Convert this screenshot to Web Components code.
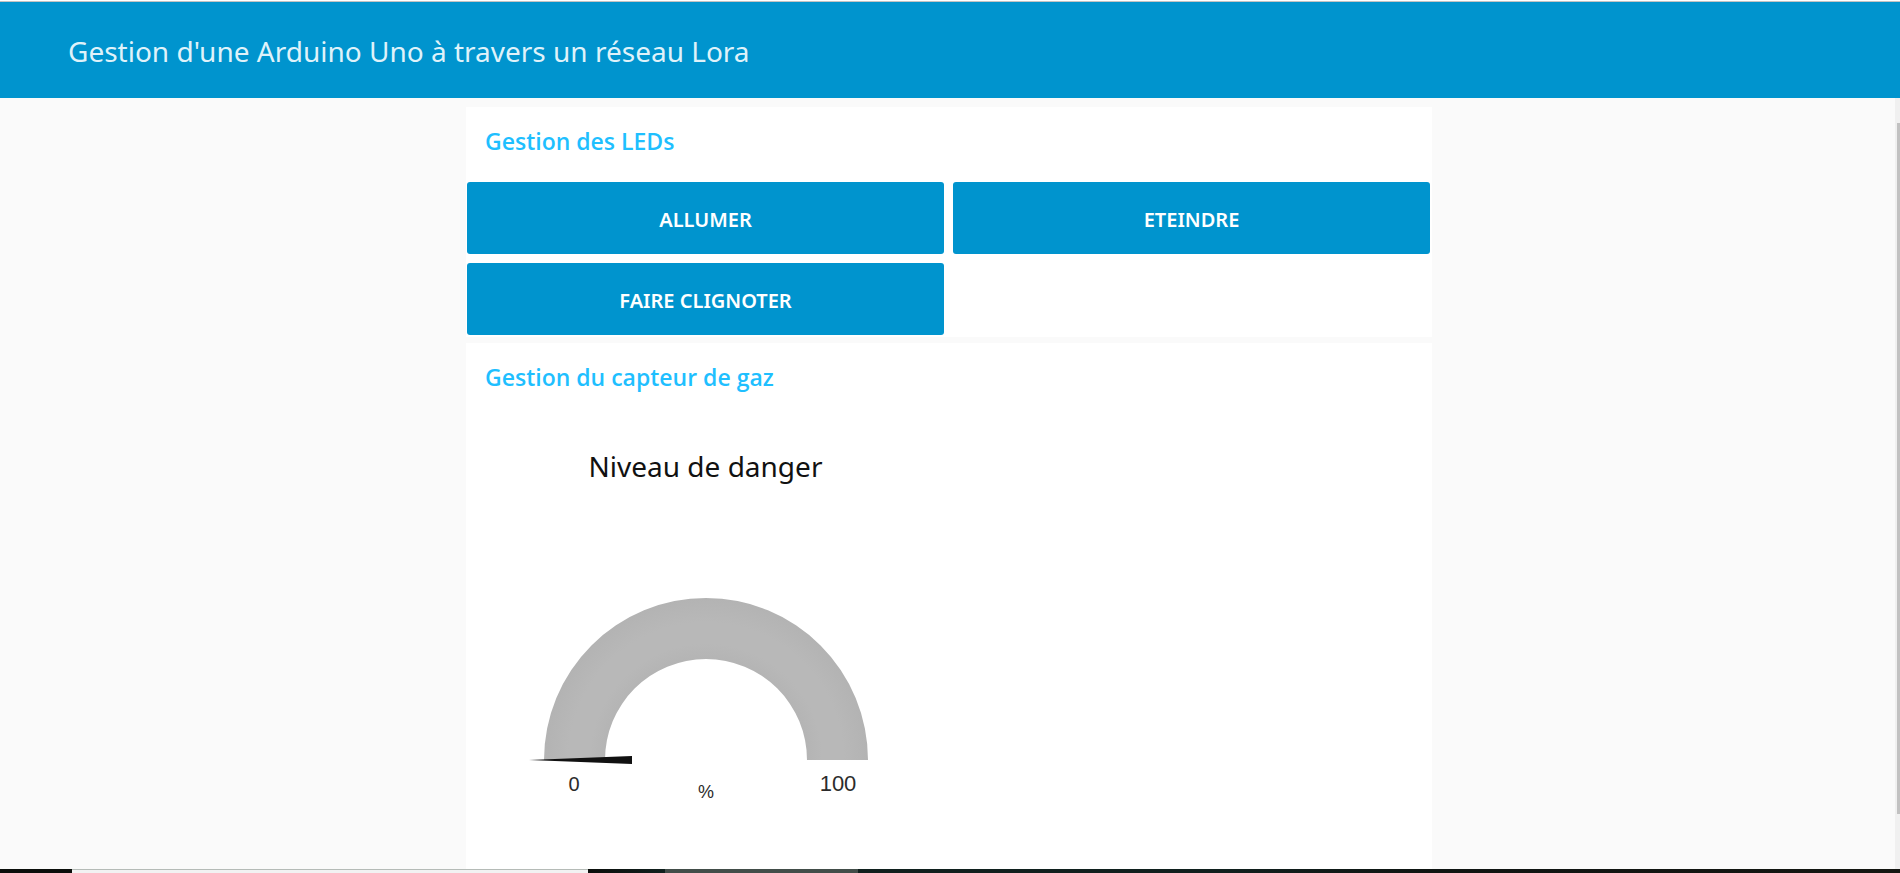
<!DOCTYPE html>
<html lang="fr">
<head>
<meta charset="utf-8">
<title>Gestion d'une Arduino Uno à travers un réseau Lora</title>
<style>
  html, body { height: 100%; margin: 0; }
  body { font-family: "Noto Sans", "Open Sans", sans-serif; background: #fafafa; color: #111; overflow: hidden; }
</style>
</head>
<body>
<dash-app>
  <dash-toolbar slot="header">Gestion d'une Arduino Uno à travers un réseau Lora</dash-toolbar>
  <dash-group heading="Gestion des LEDs">
    <dash-button>Allumer</dash-button>
    <dash-button>Eteindre</dash-button>
    <dash-button>Faire clignoter</dash-button>
  </dash-group>
  <dash-group class="last" heading="Gestion du capteur de gaz">
    <dash-gauge label="Niveau de danger" unit="%" min="0" max="100"></dash-gauge>
  </dash-group>
  <dash-scrollbar slot="scroll"></dash-scrollbar>
  <task-strip slot="footer"></task-strip>
</dash-app>
<script>
const define = (name, html, setup) => customElements.define(name, class extends HTMLElement {
  connectedCallback() {
    if (this.shadowRoot) return;
    const template = document.createElement('template');
    template.innerHTML = html;
    const root = this.attachShadow({ mode: 'open' });
    root.append(template.content.cloneNode(true));
    if (setup) setup(this, root);
  }
});

define('dash-app', `
  <style>
    :host { display: flex; flex-direction: column; height: 100vh; }
    .body { flex: 1; min-height: 0; display: flex; }
    main { flex: 1; min-width: 0; box-sizing: border-box; overflow: hidden; padding: 9px 0 0 3px;
           display: flex; flex-direction: column; align-items: center; gap: 6px; }
    ::slotted(dash-group) { width: 100%; max-width: 966px; flex: none; }
    ::slotted(dash-group.last) { flex: 1 0 auto; }
  </style>
  <slot name="header"></slot>
  <div class="body"><main><slot></slot></main><slot name="scroll"></slot></div>
  <slot name="footer"></slot>`);

define('dash-toolbar', `
  <style>
    :host { display: block; background: #fff; padding-top: 1px; flex: none; }
    header { border-top: 1px solid #c3c3c3; background: #0094ce; height: 96px; display: flex;
             align-items: center; padding: 0 68px; }
    h1 { margin: 0; font-size: 28px; line-height: 40px; font-weight: 400; color: #dff2fa; padding-top: 2px; }
  </style>
  <header><h1><slot></slot></h1></header>`);

define('dash-group', `
  <style>
    :host { display: block; background: #fff; }
    section { padding: 18px 1px 2px; }
    h2 { margin: 0 0 25px; padding: 0 18px; font-family: "Open Sans", sans-serif; font-size: 23px; line-height: 32px;
         font-weight: 600; color: #1fbfff; }
    .grid { display: grid; grid-template-columns: 1fr 1fr; gap: 9px; padding-right: 1px; }
  </style>
  <section><h2></h2><div class="grid"><slot></slot></div></section>`,
  (host, root) => { root.querySelector('h2').textContent = host.getAttribute('heading'); });

define('dash-button', `
  <style>
    :host { display: block; }
    button { display: block; width: 100%; height: 72px; border: 0; border-radius: 3px; padding: 4px 8px 0;
             background: #0094ce; color: #fff; font-family: inherit; font-size: 20px; line-height: 28px;
             font-weight: 600; text-transform: uppercase; cursor: pointer; }
  </style>
  <button type="button"><slot></slot></button>`);

define('dash-gauge', `
  <style>
    :host { display: block; padding-top: 28px; }
    h3 { margin: 0; text-align: center; font-size: 28px; line-height: 40px; font-weight: 400; color: #111; }
    svg { display: block; width: 100%; height: auto; }
    text { font-family: "Liberation Sans", Arial, sans-serif; fill: #2b2b2b; text-anchor: middle; }
  </style>
  <h3></h3>
  <svg viewBox="0 0 477 376" role="img">
    <defs>
      <radialGradient id="shade" gradientUnits="userSpaceOnUse" cx="239" cy="274" r="162">
        <stop offset=".62" stop-color="#b4b4b4"/>
        <stop offset=".72" stop-color="#b8b8b8"/>
        <stop offset=".85" stop-color="#b8b8b8"/>
        <stop offset="1" stop-color="#b3b3b3"/>
      </radialGradient>
    </defs>
    <path fill="url(#shade)" d="M77 274a162 162 0 0 1 324 0h-61a101 101 0 0 0-202 0z"/>
    <path fill="#111" d="M62 274L165 270v8z"/>
    <text class="min" x="107" y="305" font-size="20"></text>
    <text class="unit" x="239" y="312" font-size="18"></text>
    <text class="max" x="371" y="305" font-size="22"></text>
  </svg>`,
  (host, root) => {
    root.querySelector('h3').textContent = host.getAttribute('label');
    for (const key of ['min', 'unit', 'max']) root.querySelector('.' + key).textContent = host.getAttribute(key);
  });

define('dash-scrollbar', `
  <style>
    :host { flex: none; width: 5px; background: #f0f0f0; display: flex; flex-direction: column; align-items: flex-end; }
    .before { flex: 25; } .thumb { flex: 691; width: 3px; background: #c1c1c1; } .after { flex: 55; }
  </style>
  <div class="before"></div><div class="thumb"></div><div class="after"></div>`);

define('task-strip', `
  <style>
    :host { display: flex; flex: none; height: 4px; background: #0b0e0b; }
    .start { width: 72px; }
    .search { width: 516px; box-sizing: border-box; background: #f2f2f2; border-top: 1px solid #b5bbb7; }
    .gap { width: 77px; background: linear-gradient(90deg, #0b0e0b, #10201e); }
    .active { width: 193px; background: #424d49; }
    .rest { flex: 1; background: linear-gradient(90deg, #10201e 0 35%, #0f1512 55%, #141611); }
  </style>
  <div class="start"></div><div class="search"></div><div class="gap"></div><div class="active"></div><div class="rest"></div>`);
</script>
</body>
</html>
